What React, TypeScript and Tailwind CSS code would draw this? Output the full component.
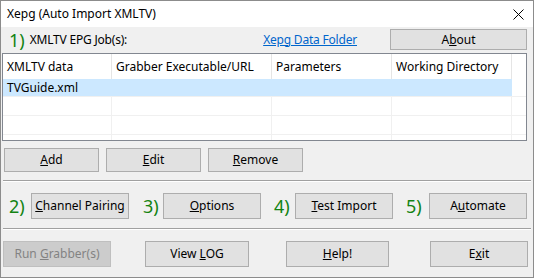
import React from "react";

const font = { fontFamily: '"Noto Sans", "Open Sans", Arial, sans-serif' };

const Btn = ({
  children,
  className = "",
  disabled = false,
}: {
  children: React.ReactNode;
  className?: string;
  disabled?: boolean;
}) => (
  <div
    className={
      "flex shrink-0 items-center justify-center border text-[12px] leading-none " +
      (disabled
        ? "border-[#bfbfbf] bg-[#cccccc] text-[#838383] "
        : "border-[#adadad] bg-[#e1e1e1] text-black ") +
      className
    }
  >
    <span className="whitespace-pre">{children}</span>
  </div>
);

const Num = ({ n, className = "" }: { n: string; className?: string }) => (
  <span className={"text-[18px] leading-none text-[#138313] " + className}>{n}</span>
);

const Sep = ({ className = "" }: { className?: string }) => (
  <div className={"ml-[2px] mr-[2px] h-[2px] border-t border-t-[#a0a0a0] border-b border-b-white " + className} />
);

const cols = [
  { label: "XMLTV data", w: "w-[109px]" },
  { label: "Grabber Executable/URL", w: "w-[160px]" },
  { label: "Parameters", w: "w-[120px]" },
  { label: "Working Directory", w: "w-[120px]" },
];

export default function App() {
  return (
    <div
      className="flex h-[278px] w-[534px] flex-col border border-[#8c8c8c] bg-[#f0f0f0] text-black"
      style={font}
    >
      {/* title bar */}
      <div className="flex h-[26px] shrink-0 items-center justify-between bg-white pl-[6px] pr-[8px]">
        <span className="text-[12px]">Xepg (Auto Import XMLTV)</span>
        <svg width="11" height="11" viewBox="0 0 11 11" className="mr-[1px]">
          <path d="M0.5 0.5 L10.5 10.5 M10.5 0.5 L0.5 10.5" stroke="#000" strokeWidth="1" />
        </svg>
      </div>

      {/* section 1 header */}
      <div className="mt-[2px] flex h-[21px] items-center">
        <Num n="1)" className="ml-[8px]" />
        <span className="ml-[5px] text-[12px] tracking-[-0.2px]">
          XMLTV EPG <span className="underline">J</span>ob(s):
        </span>
        <span className="ml-[136px] text-[12px] tracking-[-0.2px] text-[#0066cc] underline">Xepg Data Folder</span>
        <Btn className="ml-auto mr-[6px] h-[21px] w-[137px]">
          A<span className="underline">b</span>out
        </Btn>
      </div>

      {/* job list */}
      <div className="ml-[1px] mt-[3px] h-[88px] w-[525px] overflow-hidden border border-[#828790] bg-white text-[12px]">
        <div className="flex h-[25px]">
          {cols.map((c) => (
            <div key={c.label} className={"flex items-center border-r border-[#e5e5e5] pl-[4px] " + c.w}>
              {c.label}
            </div>
          ))}
        </div>
        <div className="flex h-[18px] border-b border-[#f0f0f0]">
          <div className="flex w-[509px] items-center bg-[#cce8ff] pl-[4px]">TVGuide.xml</div>
        </div>
        {[0, 1, 2].map((i) => (
          <div key={i} className="flex h-[19px] border-b border-[#f0f0f0]">
            {cols.map((c) => (
              <div key={c.label} className={"border-r border-[#f0f0f0] " + c.w} />
            ))}
          </div>
        ))}
      </div>

      {/* add / edit / remove */}
      <div className="ml-[3px] mt-[7px] flex h-[24px] gap-[7px]">
        <Btn className="w-[95px]">
          <span className="underline">A</span>dd
        </Btn>
        <Btn className="w-[95px]">
          <span className="underline">E</span>dit
        </Btn>
        <Btn className="w-[95px]">
          <span className="underline">R</span>emove
        </Btn>
      </div>

      <Sep className="mt-[8px]" />

      {/* steps */}
      <div className="mt-[11px] flex h-[26px] items-center">
        <Num n="2)" className="ml-[8px] w-[22px]" />
        <Btn className="h-[26px] w-[98px]">
          <span className="underline">C</span>hannel Pairing
        </Btn>
        <Num n="3)" className="ml-[14px] w-[20px]" />
        <Btn className="h-[26px] w-[98px]">
          <span className="underline">O</span>ptions
        </Btn>
        <Num n="4)" className="ml-[13px] w-[21px]" />
        <Btn className="h-[26px] w-[98px]">
          <span className="underline">T</span>est Import
        </Btn>
        <Num n="5)" className="ml-[13px] w-[23px]" />
        <Btn className="h-[26px] w-[98px]">
          A<span className="underline">u</span>tomate
        </Btn>
      </div>

      <Sep className="mt-[9px]" />

      {/* bottom buttons */}
      <div className="mt-[11px] flex h-[26px] items-center">
        <Btn disabled className="ml-[2px] h-[26px] w-[108px]">
          Run <span className="underline">G</span>rabber(s)
        </Btn>
        <Btn className="ml-[34px] h-[26px] w-[104px]">
          View <span className="underline">L</span>OG
        </Btn>
        <Btn className="ml-[37px] h-[26px] w-[103px]">
          <span className="underline">H</span>elp!
        </Btn>
        <Btn className="ml-[41px] h-[26px] w-[98px]">
          E<span className="underline">x</span>it
        </Btn>
      </div>
    </div>
  );
}
